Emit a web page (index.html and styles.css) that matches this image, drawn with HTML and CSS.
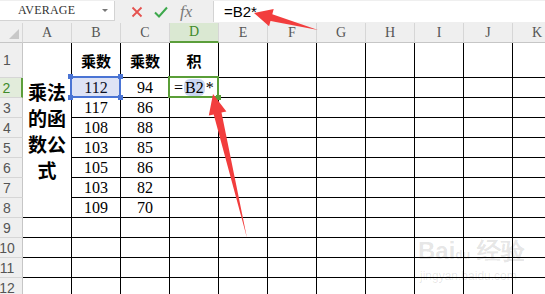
FILE: index.html
```html
<!DOCTYPE html>
<html lang="zh">
<head>
<meta charset="utf-8">
<title>乘法的函数公式</title>
<link rel="stylesheet" href="styles.css">
</head>
<body>
<div class="app">
  <div class="toolbar">
    <div class="namebox"><span class="name">AVERAGE</span><span class="caret"></span></div>
    <div class="tools">
      <svg class="ic" width="12" height="12" viewBox="0 0 12 12"><path d="M1.5 1.5 L10.5 10.5 M10.5 1.5 L1.5 10.5" stroke="#e5524f" stroke-width="1.8" fill="none"/></svg>
      <svg class="ic" width="14" height="12" viewBox="0 0 14 12"><path d="M1 6.5 L5 10.5 L13 1.5" stroke="#3da84c" stroke-width="2" fill="none"/></svg>
      <span class="fx">fx</span>
    </div>
    <div class="formula">=B2*</div>
  </div>

  <div class="sheet">
    <div class="hd corner"></div>
    <div class="hd">A</div><div class="hd">B</div><div class="hd">C</div><div class="hd hd-act">D</div><div class="hd">E</div><div class="hd">F</div><div class="hd">G</div><div class="hd">H</div><div class="hd">I</div><div class="hd">J</div><div class="hd">K</div>

    <div class="rh">1</div>
    <div class="c merged"><span class="title">乘法的函数公式</span></div>
    <div class="c th">乘数</div><div class="c th">乘数</div><div class="c th">积</div><div class="c"></div><div class="c"></div><div class="c"></div><div class="c"></div><div class="c"></div><div class="c"></div><div class="c"></div>

    <div class="rh rh-act">2</div>
    <div class="c num sel-cell">112<span class="sel"><i class="h tl"></i><i class="h tr"></i><i class="h bl"></i><i class="h br"></i></span></div>
    <div class="c num">94</div>
    <div class="c act-cell"><span class="edit">=<span class="ref">B2</span>*</span><span class="act"><i class="fill"></i></span></div>
    <div class="c"></div><div class="c"></div><div class="c"></div><div class="c"></div><div class="c"></div><div class="c"></div><div class="c"></div>

    <div class="rh">3</div>
    <div class="c num">117</div><div class="c num">86</div><div class="c"></div><div class="c"></div><div class="c"></div><div class="c"></div><div class="c"></div><div class="c"></div><div class="c"></div><div class="c"></div>
    <div class="rh">4</div>
    <div class="c num">108</div><div class="c num">88</div><div class="c"></div><div class="c"></div><div class="c"></div><div class="c"></div><div class="c"></div><div class="c"></div><div class="c"></div><div class="c"></div>
    <div class="rh">5</div>
    <div class="c num">103</div><div class="c num">85</div><div class="c"></div><div class="c"></div><div class="c"></div><div class="c"></div><div class="c"></div><div class="c"></div><div class="c"></div><div class="c"></div>
    <div class="rh">6</div>
    <div class="c num">105</div><div class="c num">86</div><div class="c"></div><div class="c"></div><div class="c"></div><div class="c"></div><div class="c"></div><div class="c"></div><div class="c"></div><div class="c"></div>
    <div class="rh">7</div>
    <div class="c num">103</div><div class="c num">82</div><div class="c"></div><div class="c"></div><div class="c"></div><div class="c"></div><div class="c"></div><div class="c"></div><div class="c"></div><div class="c"></div>
    <div class="rh">8</div>
    <div class="c num">109</div><div class="c num">70</div><div class="c"></div><div class="c"></div><div class="c"></div><div class="c"></div><div class="c"></div><div class="c"></div><div class="c"></div><div class="c"></div>

    <div class="rh">9</div>
    <div class="c"></div><div class="c"></div><div class="c"></div><div class="c"></div><div class="c"></div><div class="c"></div><div class="c"></div><div class="c"></div><div class="c"></div><div class="c"></div><div class="c"></div>
    <div class="rh">10</div>
    <div class="c"></div><div class="c"></div><div class="c"></div><div class="c"></div><div class="c"></div><div class="c"></div><div class="c"></div><div class="c"></div><div class="c"></div><div class="c"></div><div class="c"></div>
    <div class="rh">11</div>
    <div class="c"></div><div class="c"></div><div class="c"></div><div class="c"></div><div class="c"></div><div class="c"></div><div class="c"></div><div class="c"></div><div class="c"></div><div class="c"></div><div class="c"></div>
    <div class="rh">12</div>
    <div class="c"></div><div class="c"></div><div class="c"></div><div class="c"></div><div class="c"></div><div class="c"></div><div class="c"></div><div class="c"></div><div class="c"></div><div class="c"></div><div class="c"></div>
  </div>

  <svg class="arrows" width="545" height="294" viewBox="0 0 545 294">
    <polygon points="254,13 273.7,8.9 272.3,14.2 318,30 270.5,21 269.1,26.3" fill="#f23d3d"/>
    <polygon points="213,94 226.4,111.4 221.5,112.6 247,238 213.7,114.4 208.8,115.6" fill="#f23d3d"/>
  </svg>

  <div class="watermark">
    <div class="wm-top">Bai<span class="paw">du</span> 经验</div>
    <div class="wm-url">jingyan.baidu.com</div>
  </div>
</div>
</body>
</html>
```

FILE: styles.css
```css
html, body {
  margin: 0;
  padding: 0;
  background: #fff;
}

.app {
  position: relative;
  width: 545px;
  height: 294px;
  overflow: hidden;
  font-family: "Liberation Sans", Arial, sans-serif;
}

/* ---------- toolbar ---------- */
.toolbar {
  display: flex;
  align-items: flex-start;
  height: 23px;
  background: #efefef;
  box-sizing: border-box;
  padding-top: 1px;
}

.namebox {
  box-sizing: border-box;
  width: 115px;
  height: 20px;
  background: #fff;
  border-right: 1px solid #d3d3d3;
  border-bottom: 1px solid #d3d3d3;
  display: flex;
  align-items: center;
  position: relative;
}

.name {
  font-family: "Liberation Serif", serif;
  font-size: 12px;
  color: #333;
  padding-left: 18px;
  letter-spacing: 0.2px;
}

.caret {
  margin-left: auto;
  margin-right: 6px;
  width: 0;
  height: 0;
  border-left: 3px solid transparent;
  border-right: 3px solid transparent;
  border-top: 3px solid #777;
}

.tools {
  width: 98px;
  height: 21px;
  display: flex;
  align-items: center;
  padding-left: 16px;
  box-sizing: border-box;
  gap: 11px;
}

.fx {
  font-family: "Liberation Serif", serif;
  font-style: italic;
  font-size: 17px;
  color: #7a7a7a;
  margin-left: 1px;
}

.formula {
  flex: 1;
  height: 21px;
  background: #fff;
  box-sizing: border-box;
  border-left: 1px solid #d3d3d3;
  padding-left: 10px;
  font-size: 15px;
  line-height: 21px;
  color: #000;
}

/* ---------- sheet ---------- */
.sheet {
  display: grid;
  grid-template-columns: 23px repeat(11, 49px);
  grid-template-rows: 20px 35px repeat(11, 20px);
}

.hd {
  box-sizing: border-box;
  background: #efefef;
  border-right: 1px solid #d6d6d6;
  border-bottom: 1px solid #c6c6c6;
  font-family: "Liberation Serif", serif;
  font-size: 14px;
  color: #555;
  display: flex;
  align-items: center;
  justify-content: center;
}

.corner {
  position: relative;
}

.corner::after {
  content: "";
  position: absolute;
  right: 3px;
  bottom: 3px;
  width: 0;
  height: 0;
  border-left: 10px solid transparent;
  border-bottom: 10px solid #c8c8c8;
}

.hd-act {
  background: #dae8d2;
  color: #3f8a2b;
  border-bottom: 2px solid #5b9e3b;
}

.rh {
  box-sizing: border-box;
  background: #efefef;
  border-right: 1px solid #c6c6c6;
  border-bottom: 1px solid #d6d6d6;
  font-size: 14px;
  color: #555;
  display: flex;
  align-items: center;
  justify-content: center;
  padding-right: 8px;
}

.rh-act {
  background: #e2ecdb;
  color: #3f8a2b;
  border-right: 2px solid #5b9e3b;
}

.c {
  box-sizing: border-box;
  border-right: 1px solid #000;
  border-bottom: 1px solid #000;
  display: flex;
  align-items: center;
  justify-content: center;
}

.merged {
  grid-row: span 8;
  align-items: flex-start;
  padding-top: 36px;
}

.title {
  width: 40px;
  font-family: "Noto Sans CJK SC", sans-serif;
  font-weight: 700;
  font-size: 19px;
  line-height: 26px;
  text-align: center;
  color: #000;
}

.th {
  font-family: "Noto Sans CJK SC", sans-serif;
  font-weight: 700;
  font-size: 15px;
  color: #000;
}

.num {
  font-family: "Liberation Serif", serif;
  font-size: 16px;
  color: #000;
}

/* selection in B2 */
.sel-cell {
  position: relative;
}

.sel {
  position: absolute;
  left: -2px;
  top: -2px;
  right: -1px;
  bottom: -1px;
  border: 2px solid #4a74d4;
  background: rgba(70, 100, 200, 0.18);
  z-index: 1;
}

.h {
  position: absolute;
  width: 5px;
  height: 5px;
  background: #4a74d4;
}
.tl { left: -4px; top: -4px; }
.tr { right: -4px; top: -4px; }
.bl { left: -4px; bottom: -4px; }
.br { right: -4px; bottom: -4px; }

/* active cell D2 */
.act-cell {
  position: relative;
  justify-content: flex-start;
  padding-left: 4px;
}

.edit {
  font-family: "Liberation Serif", serif;
  font-size: 16px;
  color: #000;
}

.ref {
  background: #c9d6f1;
  border-radius: 6px;
  padding: 0 1px;
  margin: 0 1px;
}

.act {
  position: absolute;
  left: -2px;
  top: -2px;
  right: -1px;
  bottom: -1px;
  border: 2px solid #5a9e38;
  z-index: 1;
}

.fill {
  position: absolute;
  right: -4px;
  bottom: -4px;
  width: 5px;
  height: 5px;
  background: #5a9e38;
}

/* overlays */
.arrows {
  position: absolute;
  left: 0;
  top: 0;
  pointer-events: none;
  z-index: 5;
}

.watermark {
  position: absolute;
  left: 418px;
  top: 236px;
  z-index: 4;
  color: rgba(0, 0, 0, 0.11);
  font-family: "Liberation Sans", sans-serif;
  pointer-events: none;
}

.wm-top {
  font-size: 24px;
  font-weight: 700;
  line-height: 30px;
}

.paw {
  font-size: 12px;
}

.wm-url {
  font-size: 12px;
  line-height: 12px;
  padding-left: 2px;
}
```
